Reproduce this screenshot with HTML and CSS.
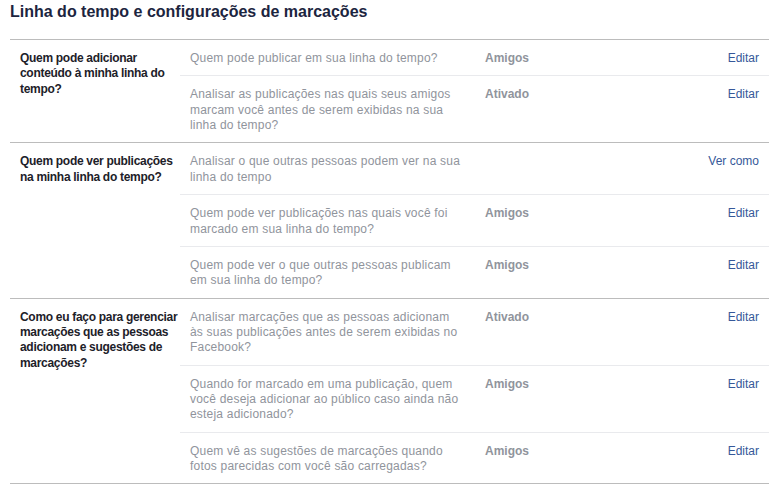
FILE: index.html
```html
<!DOCTYPE html>
<html lang="pt-BR">
<head>
<meta charset="utf-8">
<title>Linha do tempo e configurações de marcações</title>
<link rel="stylesheet" href="styles.css">
</head>
<body>
<div class="page">
  <h2 class="title">Linha do tempo e configurações de marcações</h2>

  <div class="section">
    <div class="label">Quem pode adicionar conteúdo à minha linha do tempo?</div>
    <div class="rows">
      <div class="row">
        <div class="question">Quem pode publicar em sua linha do tempo?</div>
        <div class="status">Amigos</div>
        <a class="action" href="#">Editar</a>
      </div>
      <div class="row">
        <div class="question">Analisar as publicações nas quais seus amigos marcam você antes de serem exibidas na sua linha do tempo?</div>
        <div class="status">Ativado</div>
        <a class="action" href="#">Editar</a>
      </div>
    </div>
  </div>

  <div class="section">
    <div class="label">Quem pode ver publicações na minha linha do tempo?</div>
    <div class="rows">
      <div class="row">
        <div class="question">Analisar o que outras pessoas podem ver na sua linha do tempo</div>
        <div class="status"></div>
        <a class="action" href="#">Ver como</a>
      </div>
      <div class="row">
        <div class="question">Quem pode ver publicações nas quais você foi marcado em sua linha do tempo?</div>
        <div class="status">Amigos</div>
        <a class="action" href="#">Editar</a>
      </div>
      <div class="row">
        <div class="question">Quem pode ver o que outras pessoas publicam em sua linha do tempo?</div>
        <div class="status">Amigos</div>
        <a class="action" href="#">Editar</a>
      </div>
    </div>
  </div>

  <div class="section last">
    <div class="label">Como eu faço para gerenciar marcações que as pessoas adicionam e sugestões de marcações?</div>
    <div class="rows">
      <div class="row">
        <div class="question">Analisar marcações que as pessoas adicionam às suas publicações antes de serem exibidas no Facebook?</div>
        <div class="status">Ativado</div>
        <a class="action" href="#">Editar</a>
      </div>
      <div class="row">
        <div class="question">Quando for marcado em uma publicação, quem você deseja adicionar ao público caso ainda não esteja adicionado?</div>
        <div class="status">Amigos</div>
        <a class="action" href="#">Editar</a>
      </div>
      <div class="row">
        <div class="question">Quem vê as sugestões de marcações quando fotos parecidas com você são carregadas?</div>
        <div class="status">Amigos</div>
        <a class="action" href="#">Editar</a>
      </div>
    </div>
  </div>
</div>
</body>
</html>
```

FILE: styles.css
```css
html, body {
  margin: 0;
  padding: 0;
  background: #ffffff;
}

body {
  font-family: "Liberation Sans", Arial, Helvetica, sans-serif;
  font-size: 12px;
  line-height: 15.36px;
  color: #1d2129;
}

.page {
  width: 759px;
  padding: 2px 0 0 10px;
}

.title {
  margin: 0 0 17px 0;
  font-size: 16px;
  line-height: 20px;
  font-weight: bold;
  color: #1c2540;
}

.section {
  display: flex;
  border-top: 1px solid #bcbcbc;
}

.section.last {
  border-bottom: 1px solid #bcbcbc;
}

.label {
  width: 160px;
  flex: none;
  padding: 11px 0 0 10px;
  font-weight: bold;
  letter-spacing: -0.3px;
  color: #1d2129;
}

.rows {
  flex: 1;
  display: flex;
  flex-direction: column;
}

.row {
  display: flex;
  align-items: flex-start;
  padding: 11px 10px 9px 10px;
  border-top: 1px solid #e9eaed;
}

.row:first-child {
  border-top: none;
}

.question {
  width: 274px;
  flex: none;
  margin-right: 21px;
  letter-spacing: 0.2px;
  color: #90949c;
}

.status {
  flex: 1;
  font-weight: bold;
  color: #90949c;
}

.action {
  flex: none;
  color: #365899;
  text-decoration: none;
}
```
